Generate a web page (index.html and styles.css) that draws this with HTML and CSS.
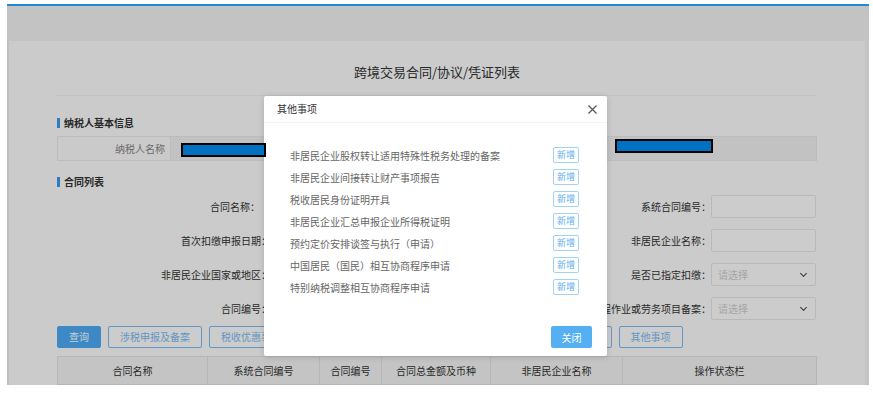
FILE: index.html
```html
<!DOCTYPE html>
<html>
<head>
<meta charset="utf-8">
<title>跨境交易合同/协议/凭证列表</title>
<link rel="stylesheet" href="styles.css">
</head>
<body>

<div class="frame">
   <div class="topbar"></div>

   <div class="main">
      <div class="panel">
         <h1 class="page-title">跨境交易合同/协议/凭证列表</h1>

         <div class="section-head">纳税人基本信息</div>
         <div class="info-box">
            <div class="info-label">纳税人名称</div>
            <div class="info-value"></div>
         </div>

         <div class="section-head">合同列表</div>

         <!-- search form: three label / field pairs per row,
              the middle column lies under the dialog -->
         <div class="search-form">
            <label class="form-label form-label-short">合同名称：</label>
            <div class="field"></div>
            <label class="form-label"></label>
            <div class="field"></div>
            <label class="form-label">系统合同编号：</label>
            <div class="field"></div>

            <label class="form-label">首次扣缴申报日期：</label>
            <div class="field"></div>
            <label class="form-label"></label>
            <div class="field"></div>
            <label class="form-label">非居民企业名称：</label>
            <div class="field"></div>

            <label class="form-label">非居民企业国家或地区：</label>
            <div class="field"></div>
            <label class="form-label"></label>
            <div class="field"></div>
            <label class="form-label">是否已指定扣缴：</label>
            <div class="field select">请选择</div>

            <label class="form-label">合同编号：</label>
            <div class="field"></div>
            <label class="form-label"></label>
            <div class="field"></div>
            <label class="form-label">是否跨境工程作业或劳务项目备案：</label>
            <div class="field select">请选择</div>
         </div>

         <div class="action-bar">
            <button class="btn btn-primary">查询</button>
            <button class="btn">涉税申报及备案</button>
            <button class="btn">税收优惠事项备案</button>
            <button class="btn">源泉扣缴登记</button>
            <button class="btn">对外支付备案</button>
            <button class="btn">扣缴情况报告附表1</button>
            <button class="btn">其他事项</button>
         </div>

         <table class="contract-table">
            <colgroup>
               <col style="width:150px">
               <col style="width:112px">
               <col style="width:62px">
               <col style="width:109px">
               <col style="width:132px">
               <col style="width:194px">
            </colgroup>
            <thead>
               <tr>
                  <th>合同名称</th>
                  <th>系统合同编号</th>
                  <th>合同编号</th>
                  <th>合同总金额及币种</th>
                  <th>非居民企业名称</th>
                  <th>操作状态栏</th>
               </tr>
            </thead>
            <tbody>
               <tr><td></td><td></td><td></td><td></td><td></td><td></td></tr>
            </tbody>
         </table>
      </div>
   </div>

   <div class="backdrop"></div>

   <div class="modal">
      <div class="modal-head">
         <span class="modal-title">其他事项</span>
         <svg class="modal-close" width="9" height="9" viewBox="0 0 9 9">
            <path d="M0.5 0.5 L8.5 8.5 M8.5 0.5 L0.5 8.5" stroke="#555" stroke-width="1.2" fill="none"/>
         </svg>
      </div>
      <div class="modal-body">
         <div class="matter-row"><span>非居民企业股权转让适用特殊性税务处理的备案</span><button class="btn-add">新增</button></div>
         <div class="matter-row"><span>非居民企业间接转让财产事项报告</span><button class="btn-add">新增</button></div>
         <div class="matter-row"><span>税收居民身份证明开具</span><button class="btn-add">新增</button></div>
         <div class="matter-row"><span>非居民企业汇总申报企业所得税证明</span><button class="btn-add">新增</button></div>
         <div class="matter-row"><span>预约定价安排谈签与执行（申请）</span><button class="btn-add">新增</button></div>
         <div class="matter-row"><span>中国居民（国民）相互协商程序申请</span><button class="btn-add">新增</button></div>
         <div class="matter-row"><span>特别纳税调整相互协商程序申请</span><button class="btn-add">新增</button></div>
      </div>
      <div class="modal-foot">
         <button class="btn-close">关闭</button>
      </div>
   </div>

   <!-- masked values -->
   <div class="redact redact-name"></div>
   <div class="redact redact-id"></div>
</div>

</body>
</html>
```

FILE: styles.css
```css
*
{
   box-sizing: border-box ;
}

body
{
   margin: 0 ;
   background: #ffffff ;
   font-family: "Noto Sans CJK SC", "Noto Sans", sans-serif ;
   font-size: 10px ;
   color: #333333 ;
}

.frame
{
   position: relative ;
   margin: 4px 0 0 7px ;
   width: 862px ;
   height: 381px ;
   border-top: 2px solid #1f8ad8 ;
   background: #f5f5f5 ;
   overflow: hidden ;
   display: flex ;
   flex-direction: column ;
}

.topbar
{
   height: 35px ;
   flex: none ;
   background: #f4f4f4 ;
}

.main
{
   flex: 1 ;
   display: flex ;
   padding-right: 5px ;
}

.panel
{
   flex: 1 ;
   background: #fefefe ;
   border-left: 2px solid #efefef ;
   padding: 0 48px 0 48px ;
}

.page-title
{
   margin: 0 ;
   padding: 21px 0 13px 0 ;
   font-size: 13px ;
   line-height: 20px ;
   font-weight: normal ;
   text-align: center ;
   border-bottom: 1px solid #f2f2f2 ;
}

.section-head
{
   display: flex ;
   align-items: center ;
   gap: 4px ;
   margin-top: 20px ;
   height: 14px ;
   line-height: 14px ;
   font-weight: bold ;
}

.section-head::before
{
   content: "" ;
   width: 3px ;
   height: 10px ;
   background: #3a9bf2 ;
}

.info-box + .section-head
{
   margin-top: 14px ;
}

.info-box
{
   display: flex ;
   margin-top: 6px ;
   height: 25px ;
   border: 1px solid #ececec ;
}

.info-label
{
   width: 113px ;
   padding-right: 5px ;
   text-align: right ;
   line-height: 23px ;
   color: #888888 ;
   background: #fdfdfd ;
   border-right: 1px solid #ececec ;
}

.info-value
{
   flex: 1 ;
   background: #f3f3f3 ;
}

.search-form
{
   display: grid ;
   grid-template-columns: 214px 101px 110px 108px 121px 105px ;
   grid-auto-rows: 23px ;
   row-gap: 11px ;
   margin-top: 6px ;
}

.form-label
{
   display: flex ;
   align-items: center ;
   justify-content: flex-end ;
   white-space: nowrap ;
}

.form-label-short
{
   padding-right: 11px ;
}

.field
{
   border: 1px solid #e8e8e8 ;
   border-radius: 2px ;
   background: #ffffff ;
}

.field.select
{
   display: flex ;
   align-items: center ;
   justify-content: space-between ;
   padding: 0 9px 0 6px ;
   color: #cfcfcf ;
}

.field.select::after
{
   content: "" ;
   width: 4px ;
   height: 4px ;
   margin-top: -3px ;
   border-right: 1px solid #444444 ;
   border-bottom: 1px solid #444444 ;
   transform: rotate( 45deg ) ;
}

.action-bar
{
   display: flex ;
   gap: 7px ;
   margin-top: 6px ;
}

.btn
{
   height: 22px ;
   padding: 0 11px ;
   font-family: inherit ;
   font-size: 10px ;
   line-height: 20px ;
   color: #7cbcf5 ;
   background: #ffffff ;
   border: 1px solid #7cbcf5 ;
   border-radius: 2px ;
   white-space: nowrap ;
}

.btn-primary
{
   color: #ffffff ;
   background: #4cacf8 ;
   border-color: #4cacf8 ;
}

.contract-table
{
   margin-top: 8px ;
   width: 759px ;
   border-collapse: collapse ;
   table-layout: fixed ;
}

.contract-table th
{
   height: 28px ;
   padding: 0 ;
   font-weight: normal ;
   background: #f6f6f6 ;
   border: 1px solid #e4e4e4 ;
}

.contract-table td
{
   height: 30px ;
   border: 1px solid #e4e4e4 ;
}

.backdrop
{
   position: absolute ;
   top: 0 ;
   left: 0 ;
   right: 0 ;
   bottom: 0 ;
   background: rgba( 0, 0, 0, 0.2 ) ;
   z-index: 1 ;
}

.modal
{
   position: absolute ;
   left: 257px ;
   top: 90px ;
   width: 343px ;
   height: 260px ;
   background: #ffffff ;
   border-radius: 2px ;
   box-shadow: 0 1px 6px rgba( 0, 0, 0, 0.15 ) ;
   z-index: 2 ;
   display: flex ;
   flex-direction: column ;
}

.modal-head
{
   display: flex ;
   align-items: center ;
   justify-content: space-between ;
   height: 27px ;
   padding: 0 10px 0 13px ;
   border-bottom: 1px solid #f3f3f3 ;
}

.modal-title
{
   line-height: 14px ;
}

.modal-body
{
   padding: 21px 28px 0 26px ;
}

.matter-row
{
   display: flex ;
   align-items: center ;
   justify-content: space-between ;
   height: 22px ;
   color: #666666 ;
}

.btn-add
{
   height: 16px ;
   padding: 0 3px ;
   font-family: inherit ;
   font-size: 9px ;
   line-height: 14px ;
   color: #5eaef0 ;
   background: #ffffff ;
   border: 1px solid #a3d2f7 ;
   border-radius: 2px ;
}

.modal-foot
{
   display: flex ;
   justify-content: flex-end ;
   padding: 28px 15px 8px 0 ;
}

.btn-close
{
   width: 41px ;
   height: 22px ;
   font-family: inherit ;
   font-size: 10px ;
   color: #ffffff ;
   background: #55aff3 ;
   border: none ;
   border-radius: 2px ;
}

.redact
{
   position: absolute ;
   height: 14px ;
   background: #0070c0 ;
   border: 2px solid #000000 ;
   z-index: 3 ;
}

.redact-name
{
   left: 174px ;
   top: 137px ;
   width: 85px ;
}

.redact-id
{
   left: 608px ;
   top: 133px ;
   width: 98px ;
}
```
